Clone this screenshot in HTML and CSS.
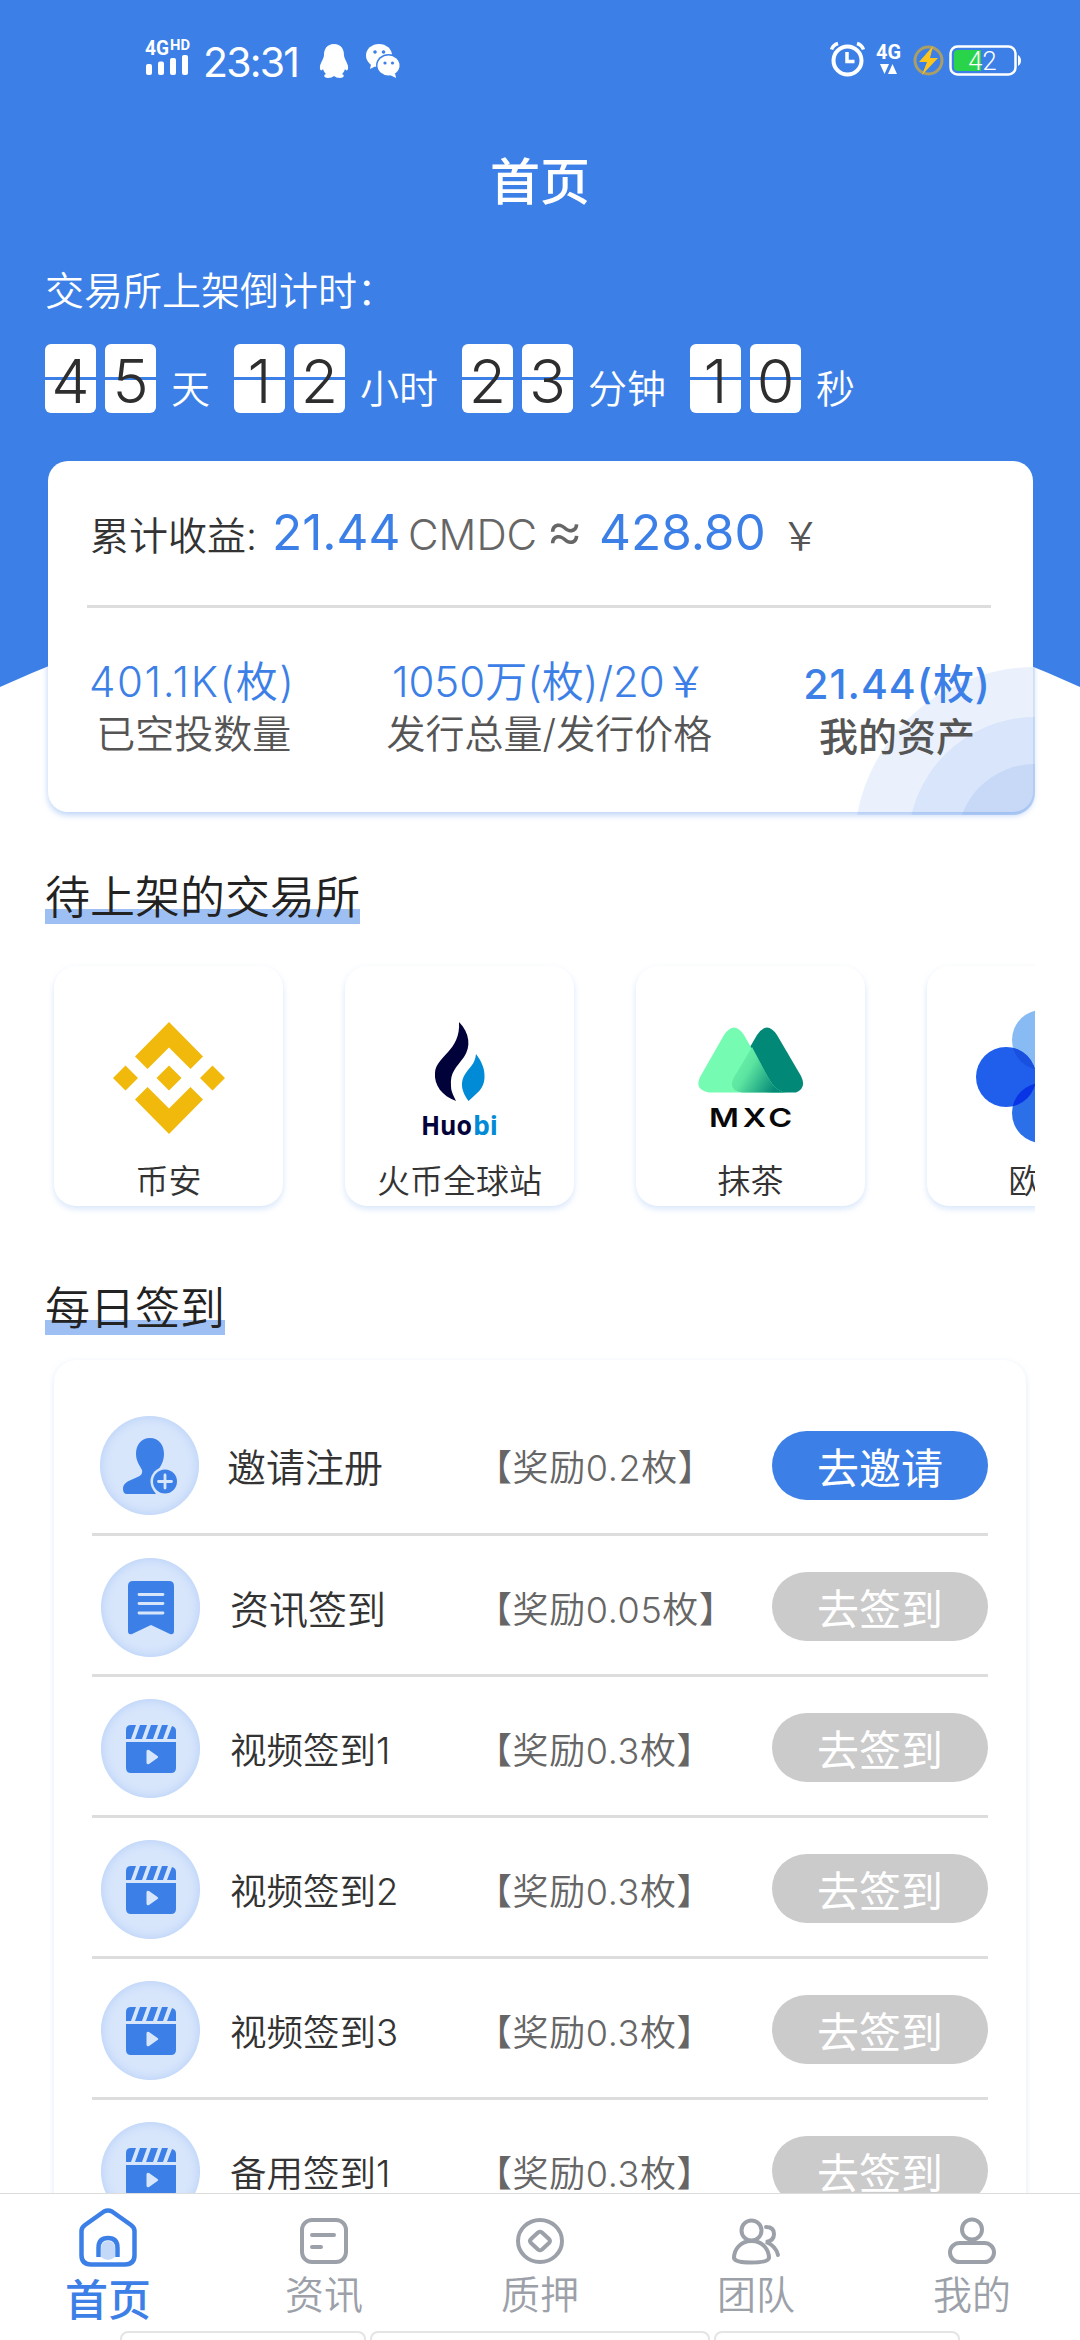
FILE: index.html
```html
<!DOCTYPE html>
<html lang="zh-CN">
<head>
<meta charset="utf-8">
<title>首页</title>
<link rel="stylesheet" href="styles.css">
</head>
<body>
<svg class="defs" width="0" height="0" aria-hidden="true">
  <defs>
    <symbol id="clapper" viewBox="0 0 50 48">
      <path d="M5 0H10L5 14H0V5Q0 0 5 0ZM14 0H21L16 14H9ZM25 0H32L27 14H20ZM36 0H42L37 14H31ZM46 1Q50 2 50 6V14H41Z" fill="#3c80e7"/>
      <path d="M0 17H50V43Q50 48 45 48H5Q0 48 0 43Z" fill="#3c80e7"/>
      <path d="M20.500 26.500Q20.500 24 23 25L31.500 31Q33 32 31.500 33L23 39Q20.500 40 20.500 37.500Z" fill="#d8e6fb"/>
    </symbol>
  </defs>
</svg>
<div class="phone">
  <main class="page">
    <section class="hero">
      <svg class="hero-bg" viewBox="0 0 1080 690"><path d="M0 0H1080V687Q540 443 0 687Z" fill="#3c80e7"/></svg>
      <header class="status">
        <div class="status-left">
          <svg class="signal" width="46" height="40" viewBox="0 0 46 40" fill="#fff">
            <text x="0" y="15.500" font-size="21" font-weight="700" textLength="24" lengthAdjust="spacingAndGlyphs">4G</text>
            <text x="25" y="10.500" font-size="14" font-weight="700" textLength="20" lengthAdjust="spacingAndGlyphs">HD</text>
            <rect x="1" y="25" width="6" height="11" rx="2"/><rect x="13" y="22.500" width="6" height="13.500" rx="2"/><rect x="25" y="19" width="6" height="17" rx="2"/><rect x="37" y="16" width="6" height="20" rx="2"/>
          </svg>
          <span class="clock">23:31</span>
          <svg class="qq" width="28" height="34" viewBox="0 0 28 34" fill="#fff"><path d="M14 0C7 0 4 5 4 11C4 14 1 18 0 22C-.5 26 1 28 3 25C4 28 5 29 6 30C3 31 4 34 8 34Q12 34 14 32Q16 34 20 34C24 34 25 31 22 30C23 29 24 28 25 25C27 28 28.500 26 28 22C27 18 24 14 24 11C24 5 21 0 14 0Z"/></svg>
          <svg class="wechat" width="34" height="34" viewBox="0 0 34 34"><path d="M1 14Q2 18 5 20.500L4 25L9 22.500Z" fill="#fff"/><ellipse cx="13" cy="11.500" rx="13" ry="11.500" fill="#fff"/><ellipse cx="22.500" cy="21.500" rx="12.500" ry="11.500" fill="#3c80e7"/><ellipse cx="22.500" cy="21.500" rx="11" ry="10" fill="#fff"/><path d="M24 31L30 34L29 29Z" fill="#fff"/><g fill="#3c80e7"><circle cx="9" cy="8" r="1.800"/><circle cx="17.500" cy="8" r="1.800"/><circle cx="19" cy="19" r="1.600"/><circle cx="26.500" cy="19" r="1.600"/></g></svg>
        </div>
        <div class="status-right">
          <svg width="35" height="36" viewBox="0 0 35 36" fill="none" stroke="#fff" stroke-width="4"><circle cx="17.500" cy="18.500" r="14"/><path d="M17 10V19.500H24.500" stroke-width="3.500"/><path d="M1.500 7.500Q3 3 8 1.500M33.500 7.500Q32 3 27 1.500" stroke-width="3.500"/></svg>
          <svg class="net" width="26" height="32" viewBox="0 0 26 32" fill="#fff"><text x="0" y="13.500" font-size="20" font-weight="700" textLength="25" lengthAdjust="spacingAndGlyphs">4G</text><path d="M4 19H13L8.500 29ZM12 29L16.500 19L21 29Z"/></svg>
          <svg class="charge" width="31" height="31" viewBox="0 0 31 31"><circle cx="15.500" cy="15.500" r="13.500" fill="none" stroke="#aa9d66" stroke-width="3"/><path d="M20 1L6 17H14L9 30L25 13H17Z" fill="#fcc41c"/></svg>
          <svg width="72" height="31" viewBox="0 0 72 31"><rect x="1.500" y="1.500" width="65" height="28" rx="7" fill="none" stroke="#fff" stroke-width="2.500"/><path d="M9 5H32V26H9Q5 26 5 22V9Q5 5 9 5Z" fill="#2ad44a"/><path d="M69 10Q72 12 72 15.500Q72 19 69 21Z" fill="#fff"/><text x="33.500" y="24.500" text-anchor="middle" font-size="25.500" fill="#fff">42</text></svg>
        </div>
      </header>
      <h1 class="title">首页</h1>
      <p class="count-label">交易所上架倒计时：</p>
      <div class="countdown">
        <b class="flip">4</b><b class="flip">5</b><span class="unit">天</span>
        <b class="flip">1</b><b class="flip">2</b><span class="unit">小时</span>
        <b class="flip">2</b><b class="flip">3</b><span class="unit">分钟</span>
        <b class="flip">1</b><b class="flip">0</b><span class="unit">秒</span>
      </div>
      <div class="asset-card">
        <svg class="ripples" width="178" height="148" viewBox="0 0 178 148"><g fill="#3c80e7"><circle cx="178" cy="181" r="181" opacity=".11"/><circle cx="178" cy="177" r="127" opacity=".1"/><circle cx="178" cy="175" r="78" opacity=".11"/></g></svg>
        <div class="earnings">
          <span class="earn-label">累计收益:</span><span class="earn-num n1">21.44</span><span class="earn-unit u1">CMDC</span><span class="earn-unit u2">≈</span><span class="earn-num n2">428.80</span><span class="earn-yen">￥</span>
        </div>
        <div class="stats">
          <div class="stat s1"><span class="v">401.1K(枚)</span><span class="k">已空投数量</span></div>
          <div class="stat s2"><span class="v">1050万(枚)/20￥</span><span class="k">发行总量/发行价格</span></div>
          <div class="stat s3"><span class="v">21.44(枚)</span><span class="k">我的资产</span></div>
        </div>
      </div>
    </section>

    <h2 class="heading h-ex">待上架的交易所</h2>
    <div class="exchanges">
      <div class="ex">
        <svg class="ex-logo" viewBox="0 0 120 140" fill="#f0b90b"><path d="M60 18L94 52.500L81.500 65L60 43.500L38.500 65L26 52.500ZM60 130L94 95.500L81.500 83L60 104.500L38.500 83L26 95.500ZM16.500 61.500L29 74L16.500 86.500L4 74ZM103.500 61.500L116 74L103.500 86.500L91 74ZM60 61.500L72.500 74L60 86.500L47.500 74Z"/></svg>
        <span>币安</span>
      </div>
      <div class="ex">
        <svg class="ex-logo" viewBox="0 0 120 140"><path d="M59 18C70 29 71 43 64 53C56 64 50 68 51 82C51 88 54 92 56 97C42 92 34 81 35 69C36 52 61 47 59 18Z" fill="#02023b"/><path d="M76 50C82 58 85 65 84.500 74C84 85 77 89 68.500 97C62 88 60 80 64 72C69 63 75 61 76 50Z" fill="#018bd6"/><g font-family="Open Sans" font-size="27.500" font-weight="700"><text x="21" y="131" fill="#02023b" textLength="51" lengthAdjust="spacingAndGlyphs">Huo</text><text x="73" y="131" fill="#018bd6" textLength="25" lengthAdjust="spacingAndGlyphs">bi</text></g></svg>
        <span>火币全球站</span>
      </div>
      <div class="ex">
        <svg class="ex-logo" viewBox="0 0 120 140"><defs><linearGradient id="mx" x1="0" y1="0" x2="1" y2="0.500"><stop offset="0" stop-color="#76fcb2"/><stop offset=".45" stop-color="#5be4a0"/><stop offset="1" stop-color="#048877"/></linearGradient></defs>
        <path d="M66 31Q76 16 86 31L110 72Q116 84 105 88.500H82Q56 88.500 44 69Z" fill="#028877"/><path d="M33 31Q43 16 53 31L78 75Q85 88.500 96 88.500H18Q3 86 9 73Z" fill="#76fcb2"/><path d="M61 43L78 75Q85 88.500 96 88.500H51Q36 86 43 73Z" fill="url(#mx)"/>
        <text x="18" y="123" font-family="Inter" font-size="26" font-weight="600" fill="#080808" textLength="87" lengthAdjust="spacingAndGlyphs" letter-spacing="3">MXC</text></svg>
        <span>抹茶</span>
      </div>
      <div class="ex">
        <svg class="ex-logo" viewBox="0 0 120 140"><circle cx="60" cy="36" r="30" fill="#88baf3"/><circle cx="60" cy="109" r="30" fill="#2c70e9"/><circle cx="24" cy="73" r="30" fill="#205fec"/><clipPath id="leftdot"><circle cx="24" cy="73" r="30"/></clipPath><circle cx="60" cy="36" r="30" fill="#1a50df" clip-path="url(#leftdot)"/><circle cx="60" cy="109" r="30" fill="#0834e6" clip-path="url(#leftdot)"/></svg>
        <span>欧易</span>
      </div>
    </div>

    <h2 class="heading h-daily">每日签到</h2>
    <div class="tasks">
      <div class="task first">
        <i class="badge"><svg width="54" height="56" viewBox="0 0 54 56"><path d="M27 0C18 0 13 7 13 16C13 23 17 28 19 32C20 37 17 38 10 41C2 44 0 47 0 51Q0 56 4 56H33C28 50 28 40 34 34C37 29 41 24 41 16C41 7 36 0 27 0Z" fill="#3c80e7"/><circle cx="42" cy="43.500" r="14.500" fill="#d8e6fb"/><circle cx="42" cy="43.500" r="12" fill="#3c80e7"/><path d="M42 37V50M35.500 43.500H48.500" stroke="#d8e6fb" stroke-width="2.800" stroke-linecap="round"/></svg></i>
        <span class="name">邀请注册</span><span class="reward">【奖励0.2枚】</span><button class="btn on">去邀请</button>
      </div>
      <div class="task">
        <i class="badge"><svg width="46" height="54" viewBox="0 0 46 54"><path d="M5 0H41Q46 0 46 5V50Q46 54 42 53L23 44L4 53Q0 54 0 50V5Q0 0 5 0Z" fill="#3c80e7"/><path d="M11 13.500H35M11 22.500H35M11 32H35" stroke="#d8e6fb" stroke-width="2.800" stroke-linecap="round"/></svg></i>
        <span class="name">资讯签到</span><span class="reward">【奖励0.05枚】</span><button class="btn">去签到</button>
      </div>
      <div class="task video">
        <i class="badge"><svg width="50" height="48"><use href="#clapper"/></svg></i>
        <span class="name">视频签到1</span><span class="reward">【奖励0.3枚】</span><button class="btn">去签到</button>
      </div>
      <div class="task video">
        <i class="badge"><svg width="50" height="48"><use href="#clapper"/></svg></i>
        <span class="name">视频签到2</span><span class="reward">【奖励0.3枚】</span><button class="btn">去签到</button>
      </div>
      <div class="task video">
        <i class="badge"><svg width="50" height="48"><use href="#clapper"/></svg></i>
        <span class="name">视频签到3</span><span class="reward">【奖励0.3枚】</span><button class="btn">去签到</button>
      </div>
      <div class="task video">
        <i class="badge"><svg width="50" height="48"><use href="#clapper"/></svg></i>
        <span class="name">备用签到1</span><span class="reward">【奖励0.3枚】</span><button class="btn">去签到</button>
      </div>
    </div>
  </main>

  <nav class="tabs">
    <a class="tab active"><svg width="58" height="59" viewBox="0 0 58 59" fill="none" stroke="#3c80e7" stroke-width="4.500" stroke-linejoin="round"><path d="M25 3.500Q29 1.500 33 3.500L52 17Q55.500 19.500 55.500 23V47Q55.500 56.500 46 56.500H12Q2.500 56.500 2.500 47V23Q2.500 19.500 6 17Z"/><path d="M22 49V40Q22 33 29 33Q36 33 36 40V49Q29 55 22 49Z" fill="#c4d8f8" stroke="none"/><path d="M19.500 49V40Q19.500 30 29 30Q38.500 30 38.500 40V49"/></svg><span>首页</span></a>
    <a class="tab"><svg width="48" height="46" viewBox="0 0 48 46" fill="none" stroke="#9ca1a9" stroke-width="4" stroke-linecap="round"><rect x="2" y="2" width="44" height="42" rx="10"/><path d="M12 17H34M12 29H21"/></svg><span>资讯</span></a>
    <a class="tab"><svg width="48" height="46" viewBox="0 0 48 46" fill="none" stroke="#9ca1a9" stroke-width="4" stroke-linejoin="round"><ellipse cx="24" cy="23" rx="22" ry="21"/><path d="M22 14.500Q24 13 26 14.500L33 21Q35 23 33 25L26 31.500Q24 33 22 31.500L15 25Q13 23 15 21Z"/></svg><span>质押</span></a>
    <a class="tab"><svg width="48" height="46" viewBox="0 0 48 46" fill="none" stroke="#9ca1a9" stroke-width="4" stroke-linecap="round"><circle cx="19.500" cy="12.500" r="10"/><path d="M19.500 23C8 23 2 32 2 40Q3 44.500 19 44.500Q36 44.500 37 40C37 32 31 23 19.500 23Z"/><path d="M34 9Q42 9 42 16Q42 23 34 24Q44 28 46 37"/></svg><span>团队</span></a>
    <a class="tab"><svg width="48" height="46" viewBox="0 0 48 46" fill="none" stroke="#9ca1a9" stroke-width="4"><circle cx="24" cy="11.500" r="10"/><rect x="2" y="25" width="44" height="19" rx="9.500"/></svg><span>我的</span></a>
  </nav>
  <div class="keys"><i class="k1"></i><i class="k2"></i><i class="k3"></i></div>
</div>
</body>
</html>
```
FILE: styles.css
```css
* { box-sizing: border-box; margin: 0; padding: 0; }
body {
  width: 1080px; height: 2340px; overflow: hidden; background: #fff;
  font-family: Inter, "Noto Sans CJK SC", sans-serif;
  font-weight: 350; color: #333;
}
svg { display: block; flex: none; overflow: visible; }
.defs { position: absolute; }
.phone { display: flex; flex-direction: column; height: 2340px; }
.page { height: 2193px; overflow: hidden; flex: none; }

.hero { position: relative; height: 812px; display: flex; flex-direction: column; }
.hero-bg { position: absolute; left: 0; top: 0; width: 1080px; height: 690px; }
.hero > *:not(.hero-bg) { position: relative; }

.status { display: flex; justify-content: space-between; padding: 39px 59px 0 145px; height: 120px; color: #fff; }
.status-left, .status-right { display: flex; align-items: flex-start; }
.clock { font-weight: 400; font-size: 41px; line-height: 47px; margin-left: 12px; width: 101px; white-space: nowrap; letter-spacing: -1.8px; }
.qq { margin: 5px 0 0 16px; }
.wechat { margin: 5px 0 0 18px; }
.signal, .status-right text { font-family: Roboto; }
.status-right { padding-top: 3px; }
.net { margin: 3px 0 0 11px; }
.charge { margin: 3px 5px 0 11px; }
.status-right svg:last-child { margin-top: 3px; }

.title { height: 130px; line-height: 124px; font-size: 50px; font-weight: 500; color: #fff; text-align: center; }
.count-label { height: 94px; line-height: 81px; padding-left: 45px; font-size: 39px; color: #fff; }
.countdown { display: flex; height: 69px; padding-left: 45px; align-items: flex-end; }
.flip {
  width: 51px; height: 69px; margin-right: 9px; border-radius: 6px; flex: none;
  background: linear-gradient(#3c80e7, #3c80e7) 0 33px / 100% 3px no-repeat #fff;
  font-size: 61px; font-weight: 300; line-height: 75px; text-align: center; color: #2e2e2e;
}
.unit { font-size: 39px; line-height: 48px; color: #fff; margin: 0 24px 0 6px; }

.asset-card {
  margin: 48px 48px 0; width: 985px; height: 351px; border-radius: 20px; background: #fff;
  box-shadow: 0 3px 6px rgba(60, 128, 231, .35); flex: none;
}
.ripples { position: absolute; right: -2px; bottom: -3px; overflow: hidden; border-bottom-right-radius: 22px; }
.earnings { display: flex; align-items: baseline; height: 147px; line-height: 142px; margin: 0 42px 0 39px; padding-left: 3px; border-bottom: 3px solid #ddd; white-space: nowrap; }
.earn-label { font-size: 39px; width: 182px; color: #333; }
.earn-num { font-size: 49.5px; font-weight: 400; color: #3c80e7; }
.n1 { width: 136px; }
.earn-unit { font-size: 42px; color: #666; }
.u1 { width: 138px; }
.u2 { width: 53px; font-size: 57px; font-weight: 300; line-height: 0; }
.n2 { width: 182px; }
.earn-yen { font-size: 39px; color: #555; }
.stats { position: relative; display: flex; justify-content: space-between; padding: 48px 42px 0 41px; white-space: nowrap; }
.stat { display: flex; flex-direction: column; align-items: center; }
.v { font-size: 42px; line-height: 52px; color: #3c80e7; }
.k { font-size: 39px; line-height: 52px; color: #555; }
.s1 .v { letter-spacing: 1.6px; }
.s1 .k { padding-left: 3px; }
.s3 { padding-top: 2px; font-weight: 500; }
.s3 .v { font-size: 41px; letter-spacing: 1px; line-height: 53px; }

.heading { display: table; margin-left: 45px; font-size: 45px; font-weight: 350; line-height: 60px; color: #222;
  padding-top: 3px; height: 60px; line-height: 57px;
  background: linear-gradient(rgba(60,128,231,.5), rgba(60,128,231,.5)) 0 100% / 100% 15px no-repeat; }
.heading { display: block; width: max-content; padding-top: 4px; line-height: 60px; }
.h-ex { margin-top: 52px; }
.exchanges { display: flex; gap: 62px; margin: 0 45px; padding: 42px 0 20px 9px; overflow: hidden; }
.ex {
  width: 229px; height: 240px; flex: none; display: flex; flex-direction: column; align-items: center;
  border-radius: 22px; box-shadow: 0 3px 6px rgba(60, 128, 231, .2); color: #333;
}
.ex-logo { width: 120px; height: 140px; margin-top: 38px; }
.ex span { font-size: 33px; line-height: 40px; margin-top: 17px; }

.h-daily { margin-top: 49px; }
.tasks { margin: 25px 54px 0; padding: 35px 38px 0; height: 1000px; border-radius: 22px; box-shadow: 0 2px 6px rgba(70, 150, 220, .18); }
.task { display: flex; align-items: center; height: 141px; border-bottom: 3px solid #ddd; padding: 5px 0 0 9px; }
.task.first { padding: 3px 0 0 8px; }
.badge { width: 99px; height: 99px; flex: none; border-radius: 50%; background: #d8e6fb; box-shadow: inset 0 0 12px #b3cdf8; display: flex; align-items: center; justify-content: center; }
.name { font-size: 39px; width: 246px; margin: -2px 0 0 30px; white-space: nowrap; }
.first .name { margin-left: 28px; width: 249px; margin-top: -1px; }
.video .name { font-size: 36.5px; margin-top: -1px; }
.reward { font-size: 36px; color: #666; width: 296px; white-space: nowrap; letter-spacing: .6px; margin-top: -1px; }
.btn { width: 216px; height: 69px; margin-bottom: 2px; flex: none; border: 0; border-radius: 35px; background: #cbcbcb; color: #fff; font: 400 42px/66px "Noto Sans CJK SC", sans-serif; }
.btn.on { background: #3c80e7; margin-bottom: 0; }

.tabs { display: flex; height: 138px; border-top: 1px solid #dcdcdc; flex: none; background: #fff; }
.tab { width: 216px; display: flex; flex-direction: column; align-items: center; color: #9ca1a9; font-size: 39px; padding-top: 24px; }
.tab span { line-height: 50px; margin-top: 6px; }
.tab.active { padding-top: 14px; color: #3c80e7; font-size: 43px; font-weight: 500; }
.tab.active span { margin-top: 8px; }
.keys { display: flex; height: 9px; overflow: hidden; padding-left: 120px; }
.keys i { height: 30px; border: 2px solid #e4e4e4; border-radius: 8px; flex: none; }
.k1 { width: 246px; margin-right: 4px; }
.k2 { width: 340px; margin-right: 4px; }
.k3 { width: 246px; }
```
